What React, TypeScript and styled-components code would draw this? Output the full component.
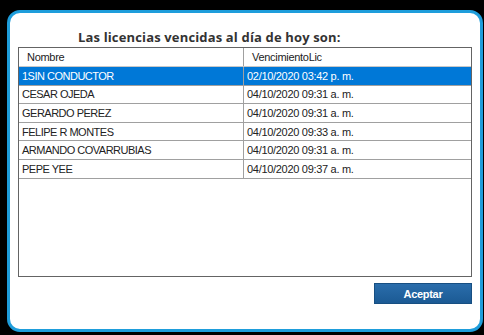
import React, {FC} from 'react';
import styled, {createGlobalStyle} from 'styled-components';

const GlobalStyle = createGlobalStyle`
    html, body {
        margin: 0;
        padding: 0;
        background: #000;
    }
    body {
        width: 484px;
        height: 335px;
        overflow: hidden;
    }
`;

const Panel = styled.div`
    box-sizing: border-box;
    margin: 10px 0 0 7px;
    width: 476px;
    height: 322px;
    background: #fff;
    border: 3px solid #1e9ddb;
    border-radius: 13px;
    padding: 0 8px;
    display: flex;
    flex-direction: column;
`;

const Title = styled.div`
    font-family: "Open Sans", "Liberation Sans", sans-serif;
    font-weight: 700;
    font-size: 13px;
    letter-spacing: 0.15px;
    line-height: 16px;
    color: #333;
    padding: 16px 0 2px 60px;
`;

const Grid = styled.div`
    box-sizing: border-box;
    height: 230px;
    border: 1px solid #646464;
    background: #fff;
    font-family: "Liberation Sans", Arial, sans-serif;
    font-size: 11px;
    letter-spacing: -0.3px;
`;

const Row = styled.div<{selected?: boolean; header?: boolean}>`
    display: grid;
    grid-template-columns: 225px 1fr;
    height: ${p => (p.header ? '19px' : '18.6px')};
    box-sizing: border-box;
    border-bottom: 1px solid ${p => (p.header ? '#c8c8c8' : '#a0a0a0')};
    background: ${p => (p.selected ? '#0078d7' : '#fff')};
    color: ${p => (p.selected ? '#fff' : '#222')};
`;

const Cell = styled.div<{header?: boolean; first?: boolean}>`
    display: flex;
    align-items: center;
    padding-left: ${p => (p.header ? '8px' : '3px')};
    border-right: ${p => (p.first ? '1px solid #a0a0a0' : 'none')};
    white-space: nowrap;
    overflow: hidden;
    letter-spacing: ${p => (p.first && !p.header ? '-0.5px' : 'inherit')};
`;

const Footer = styled.div`
    display: flex;
    justify-content: flex-end;
    padding-top: 6px;
`;

const Button = styled.button`
    width: 98px;
    height: 21px;
    border: 1px solid #174f82;
    background: linear-gradient(#2a6dab, #1b5a94);
    color: #fff;
    font-family: "Liberation Sans", Arial, sans-serif;
    font-weight: 700;
    font-size: 11px;
    letter-spacing: -0.3px;
    padding: 0;
`;

const rows = [
    ['1SIN CONDUCTOR', '02/10/2020 03:42 p. m.'],
    ['CESAR OJEDA', '04/10/2020 09:31 a. m.'],
    ['GERARDO PEREZ', '04/10/2020 09:31 a. m.'],
    ['FELIPE R MONTES', '04/10/2020 09:33 a. m.'],
    ['ARMANDO COVARRUBIAS', '04/10/2020 09:31 a. m.'],
    ['PEPE YEE', '04/10/2020 09:37 a. m.'],
];

const App: FC = () => {
    return (
        <>
            <GlobalStyle />
            <Panel>
                <Title>Las licencias vencidas al día de hoy son:</Title>
                <Grid>
                    <Row header>
                        <Cell header first>Nombre</Cell>
                        <Cell header>VencimientoLic</Cell>
                    </Row>
                    {rows.map((r, i) => (
                        <Row key={i} selected={i === 0}>
                            <Cell first>{r[0]}</Cell>
                            <Cell>{r[1]}</Cell>
                        </Row>
                    ))}
                </Grid>
                <Footer>
                    <Button>Aceptar</Button>
                </Footer>
            </Panel>
        </>
    );
};

export default App;
